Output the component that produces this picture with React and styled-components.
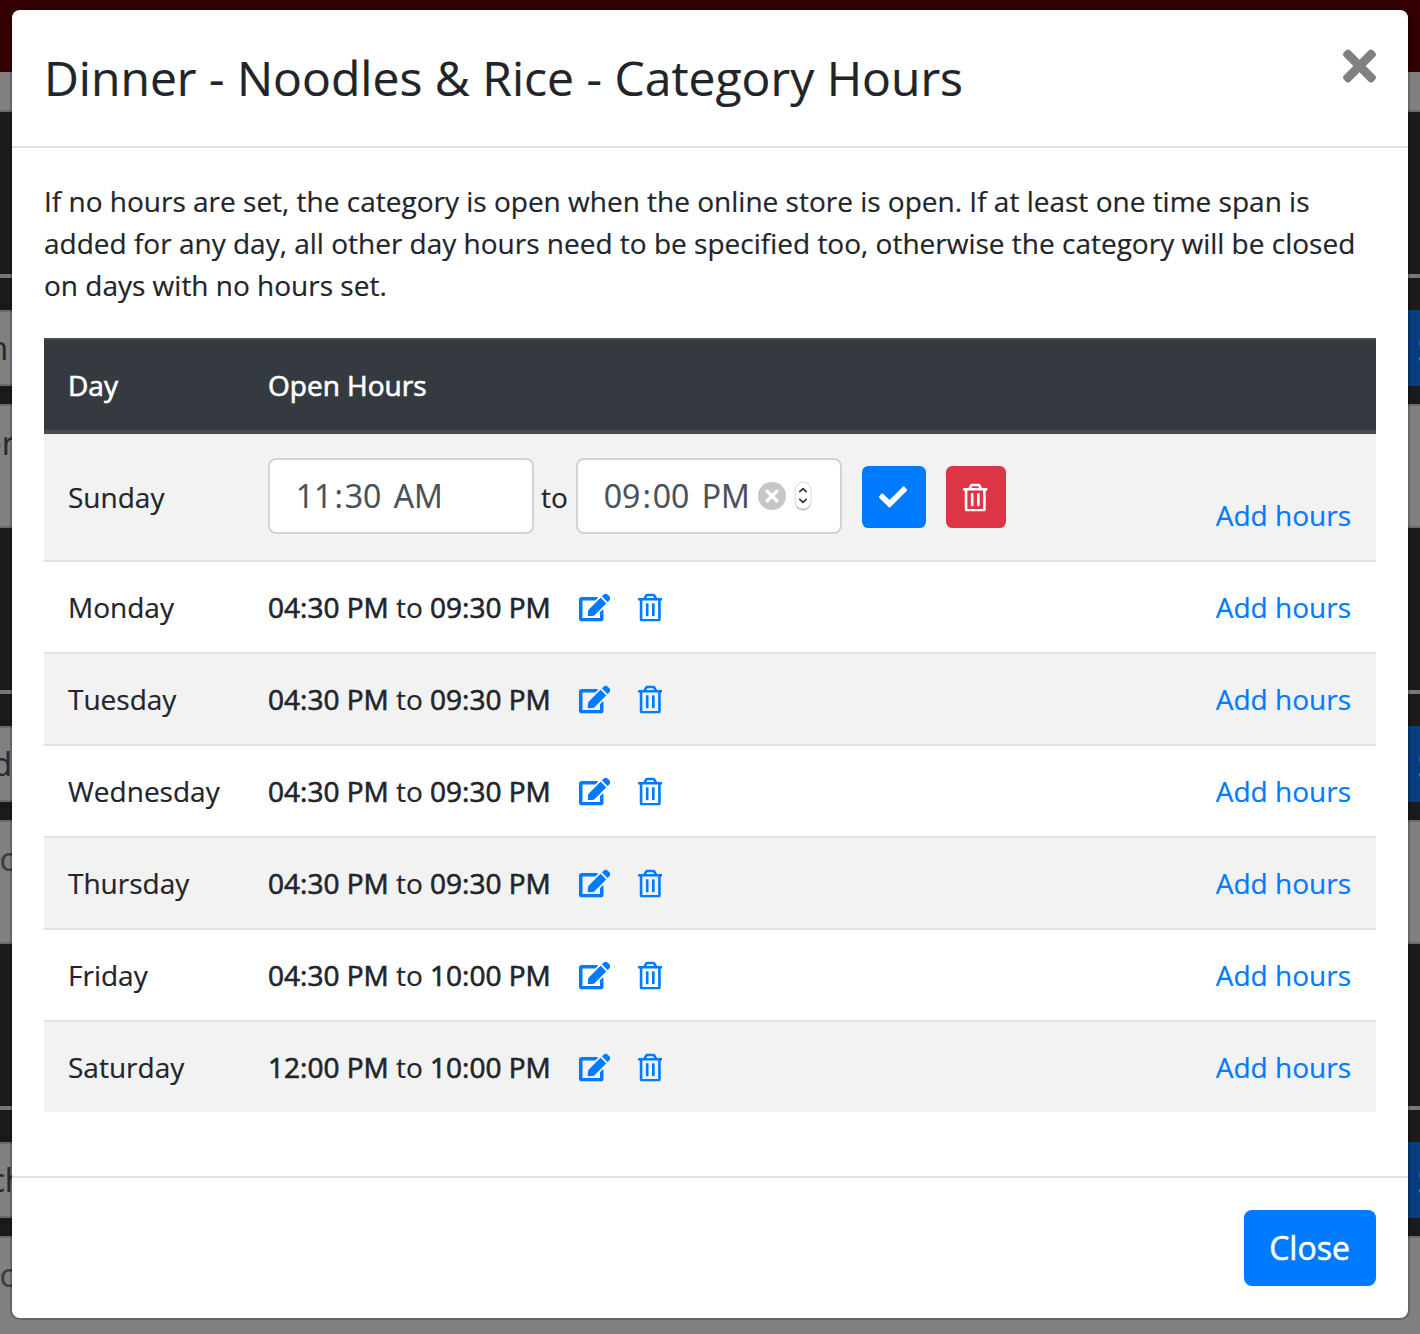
import { useState } from 'react';
import styled, { createGlobalStyle } from 'styled-components';
import { FaCheck, FaEdit, FaRegTrashAlt, FaTimes } from 'react-icons/fa';

const days = [
    { name: 'Monday', from: '04:30 PM', to: '09:30 PM' },
    { name: 'Tuesday', from: '04:30 PM', to: '09:30 PM' },
    { name: 'Wednesday', from: '04:30 PM', to: '09:30 PM' },
    { name: 'Thursday', from: '04:30 PM', to: '09:30 PM' },
    { name: 'Friday', from: '04:30 PM', to: '10:00 PM' },
    { name: 'Saturday', from: '12:00 PM', to: '10:00 PM' },
];

const categories = [
    { name: 'n', nameIndent: '-11.4px', description: 'or', indent: '-17.6px' },
    { name: 'd', nameIndent: '-7.6px', description: 'c', indent: '-0.6px', muted: true },
    { name: 'ch', nameIndent: '-10.5px', description: 'c', indent: '-0.6px', muted: true },
];

export default function App() {
    const [open, setOpen] = useState(true);

    return (
        <Screen>
            <GlobalStyle />
            <MenuPage />
            {open && (
                <Overlay>
                    <CategoryHours onClose={() => setOpen(false)} />
                </Overlay>
            )}
        </Screen>
    )
}

function MenuPage() {
    return (
        <Page>
            <TopBar />
            <Toolbar />
            {categories.map((category) => (
                <Category key={category.name}>
                    <Divider />
                    <NameRow>
                        <NameInput $indent={category.nameIndent}>{category.name}</NameInput>
                        <SaveBlock>S</SaveBlock>
                    </NameRow>
                    <Description $indent={category.indent} $muted={category.muted}>{category.description}</Description>
                </Category>
            ))}
        </Page>
    )
}

function CategoryHours({ onClose }) {
    return (
        <Modal>
            <Header>
                <Title>Dinner - Noodles &amp; Rice - Category Hours</Title>
                <Dismiss onClick={onClose} aria-label="Close"><FaTimes /></Dismiss>
            </Header>
            <Body>
                <Intro>
                    If no hours are set, the category is open when the online store is open. If at least one time span is added for any day, all other day hours need to be specified too, otherwise the category will be closed on days with no hours set.
                </Intro>
                <HeadRow>
                    <Strong>Day</Strong>
                    <Strong>Open Hours</Strong>
                </HeadRow>
                <EditRow />
                {days.map((day, i) => <DayRow key={day.name} day={day} $striped={i % 2 === 1} />)}
            </Body>
            <Footer>
                <CloseButton onClick={onClose}>Close</CloseButton>
            </Footer>
        </Modal>
    )
}

function EditRow() {
    return (
        <Row $striped $tall>
            <span>Sunday</span>
            <Hours>
                <TimeField>
                    <Time hour="11" minute="30" period="AM" />
                </TimeField>
                <To>to</To>
                <TimeField>
                    <Time hour="09" minute="00" period="PM" />
                    <ClearIcon />
                    <SpinnerIcon />
                </TimeField>
                <SquareButton $width="64px" $color="#007bff"><CheckIcon /></SquareButton>
                <SquareButton $width="60px" $color="#dc3545"><TrashIcon /></SquareButton>
            </Hours>
            <AddLink $low>Add hours</AddLink>
        </Row>
    )
}

function Time({ hour, minute, period }) {
    return (
        <TimeText>
            <Part>{hour}</Part>:<Part>{minute}</Part> <Part>{period}</Part>
        </TimeText>
    )
}

function DayRow({ day, $striped }) {
    return (
        <Row $striped={$striped}>
            <span>{day.name}</span>
            <Hours>
                <span><Strong>{day.from}</Strong> to <Strong>{day.to}</Strong></span>
                <Actions>
                    <EditIcon />
                    <TrashIcon />
                </Actions>
            </Hours>
            <AddLink>Add hours</AddLink>
        </Row>
    )
}

function ClearIcon() {
    return (
        <Clear viewBox="0 0 28 28">
            <circle cx="14" cy="14" r="14" fill="#c6c6c6" />
            <path d="M9.2 9.2l9.6 9.6M18.8 9.2l-9.6 9.6" stroke="#fff" strokeWidth="3.4" strokeLinecap="round" />
        </Clear>
    )
}

function SpinnerIcon() {
    return (
        <Spinner viewBox="0 0 18 30">
            <rect x="1" y="2" width="16" height="27.5" rx="8" fill="#bcbcbc" />
            <rect x="1" y="1" width="16" height="27" rx="8" fill="#fff" stroke="#d8d8d8" />
            <path d="M5.8 10.6L9 7.6l3.2 3M5.8 18.4l3.2 3 3.2-3" fill="none" stroke="#333" strokeWidth="1.7" strokeLinecap="round" strokeLinejoin="round" />
        </Spinner>
    )
}

const GlobalStyle = createGlobalStyle`
    * {
        box-sizing: border-box;
    }
    body {
        margin: 0;
        font-family: "Open Sans", "Noto Sans", sans-serif;
        font-size: 28px;
        line-height: 42px;
        color: #212529;
        -webkit-text-stroke: 0.2px currentColor;
    }
    button {
        font-family: inherit;
        border: 0;
        padding: 0;
        cursor: pointer;
    }
`

const Screen = styled.div`
    position: relative;
    height: 1334px;
    overflow: hidden;
`

const Page = styled.div`
    background: #1a1a1a;
`

const TopBar = styled.div`
    height: 72px;
    background: #330000;
`

const Toolbar = styled.div`
    height: 40px;
    background: #808080;
    border-bottom: 2px solid #69696e;
`

const Category = styled.section`
    padding-top: 162px;
`

const Divider = styled.div`
    height: 4px;
    background: #777;
    margin-bottom: 32px;
`

const NameRow = styled.div`
    display: grid;
    grid-template-columns: 1fr 1fr;
    height: 76px;
    margin-bottom: 18px;
    font-size: 32px;
`

const NameInput = styled.div`
    padding-top: 15px;
    text-indent: ${({ $indent }) => $indent};
    color: #25292d;
    background: #808080;
    border: solid #69696e;
    border-width: 2px 0;
`

const SaveBlock = styled.div`
    padding: 18px 0 0 707.6px;
    color: #808080;
    background: #083e80;
    overflow: hidden;
`

const Description = styled.div`
    height: 124px;
    padding-top: 16px;
    font-size: 32px;
    text-indent: ${({ $indent }) => $indent};
    color: ${({ $muted }) => $muted ? '#394044' : '#25292d'};
    background: #808080;
    border: solid #69696e;
    border-width: 2px 0;
`

const Overlay = styled.div`
    position: absolute;
    inset: 0;
    padding: 8px 10px 14px;
`

const Modal = styled.div`
    height: 1312px;
    background: #fff;
    background-clip: padding-box;
    border: 2px solid rgba(0, 0, 0, 0.2);
    border-radius: 9.6px;
`

const Header = styled.header`
    display: flex;
    justify-content: space-between;
    align-items: flex-start;
    height: 138px;
    padding: 32px;
    border-bottom: 2px solid #dee2e6;
`

const Title = styled.h5`
    margin: 0;
    font-size: 48px;
    font-weight: 400;
    line-height: 72px;
    letter-spacing: 0.02px;
`

const Dismiss = styled.button`
    display: flex;
    color: #808080;
    background: none;

    svg {
        width: 33px;
        height: 48px;
    }
`

const Body = styled.div`
    padding: 32px 32px 64px;
`

const Intro = styled.p`
    margin: 0 0 32px;
`

const HeadRow = styled.div`
    display: grid;
    grid-template-columns: 200px 1fr;
    align-items: center;
    height: 96px;
    padding: 0 24px;
    color: #fff;
    background: #343a40;
    border-top: 2px solid #454d55;
    border-bottom: 4px solid #454d55;
`

const Row = styled.div`
    display: grid;
    grid-template-columns: 200px 1fr auto;
    align-items: center;
    height: ${({ $tall }) => $tall ? '128px' : '92px'};
    padding: 0 25px 0 24px;
    background: ${({ $striped }) => $striped ? '#f2f2f2' : '#fff'};
    border-bottom: 2px solid #dee2e6;

    &:last-child {
        height: 90px;
        border-bottom: 0;
    }
`

/* thickens the regular cut without changing its widths */
const Strong = styled.span`
    -webkit-text-stroke: 0.65px currentColor;
`

const Hours = styled.div`
    display: flex;
    align-items: center;
`

const TimeField = styled.div`
    display: flex;
    align-items: center;
    width: 266px;
    height: 76px;
    margin-bottom: 2px;
    padding-left: 23.8px;
    font-size: 32px;
    color: #495057;
    background: #fff;
    border: 2px solid #ced4da;
    border-radius: 8px;
`

const TimeText = styled.span`
    white-space: pre;
`

const Part = styled.span`
    padding: 0 2px;
`

const To = styled.span`
    width: 42px;
    padding-left: 7px;
`

const Clear = styled.svg`
    width: 28px;
    height: 28px;
    margin-left: 6.2px;
`

const Spinner = styled.svg`
    width: 18px;
    height: 30px;
    margin-left: 8px;
`

const CheckIcon = styled(FaCheck)`
    width: 28px;
    height: 28px;
    margin: 0 1px 1px 0;
`

const EditIcon = styled(FaEdit)`
    width: 31.5px;
    height: 28px;
`

const TrashIcon = styled(FaRegTrashAlt)`
    width: 24.5px;
    height: 28px;
    transform: translateY(-0.5px);
`

const SquareButton = styled.button`
    display: flex;
    justify-content: center;
    align-items: center;
    width: ${({ $width }) => $width};
    height: 62px;
    margin-left: 20px;
    padding: 1px 1px 0 0;
    color: #fff;
    background: ${({ $color }) => $color};
    border-radius: 6.4px;
`

const Actions = styled.div`
    display: flex;
    gap: 27.5px;
    margin: 1px 0 0 27.8px;
    color: #007bff;

    ${EditIcon} {
        transform: translateY(-0.5px);
    }
`

const AddLink = styled.a`
    padding-top: ${({ $low }) => $low ? '36px' : '0'};
    color: #007bff;
`

const Footer = styled.footer`
    display: flex;
    justify-content: flex-end;
    padding: 32px;
    border-top: 2px solid #dee2e6;
`

const CloseButton = styled.button`
    width: 132px;
    height: 76px;
    padding-right: 1px;
    font-size: 32px;
    line-height: 48px;
    color: #fff;
    background: #007bff;
    border-radius: 8px;
    -webkit-text-stroke: 0.5px currentColor;
`
